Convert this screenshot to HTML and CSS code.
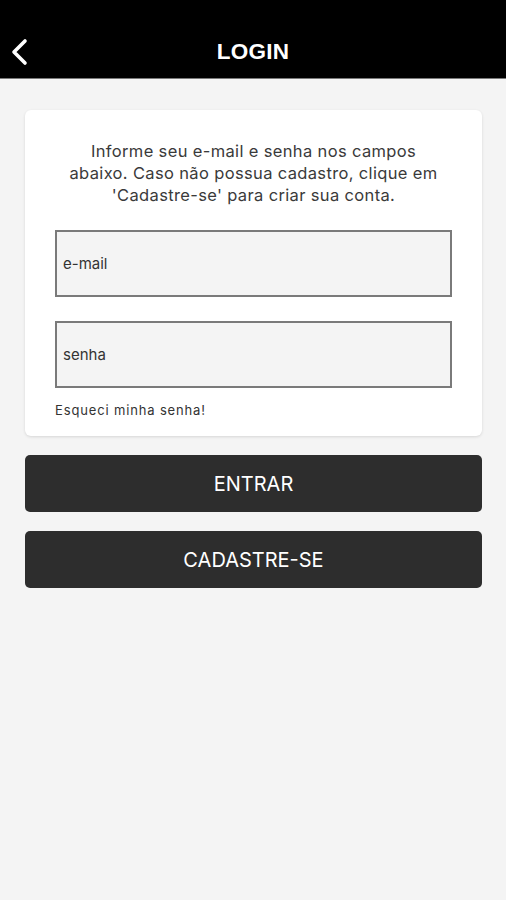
FILE: index.html
```html
<!DOCTYPE html>
<html lang="pt">
<head>
<meta charset="utf-8">
<title>Login</title>
<link rel="stylesheet" href="styles.css">
</head>
<body>
<header class="topbar">
  <button class="back" aria-label="Voltar">
    <svg width="18" height="28" viewBox="0 0 18 28"><path d="M15 3 L4 14 L15 25" fill="none" stroke="#fff" stroke-width="3.6" stroke-linecap="round" stroke-linejoin="round"/></svg>
  </button>
  <h1 class="title">LOGIN</h1>
</header>
<main class="content">
  <section class="card">
    <p class="intro">Informe seu e-mail e senha nos campos abaixo. Caso não possua cadastro, clique em 'Cadastre-se' para criar sua conta.</p>
    <div class="field"><span class="placeholder">e-mail</span></div>
    <div class="field field-2"><span class="placeholder">senha</span></div>
    <a class="forgot">Esqueci minha senha!</a>
  </section>
  <button class="btn">ENTRAR</button>
  <button class="btn">CADASTRE-SE</button>
</main>
</body>
</html>
```
FILE: styles.css
```css
* { box-sizing: border-box; }
html, body { margin: 0; padding: 0; }
body {
  background: #f4f4f4;
  font-family: Inter, "Liberation Sans", Arial, sans-serif;
  color: #333;
  width: 506px;
  height: 900px;
}
.topbar {
  height: 79px;
  background: #000;
  border-bottom: 1px solid #7a7a7a;
  position: relative;
  display: flex;
  align-items: flex-end;
  justify-content: center;
  padding-bottom: 13px;
}
.back {
  position: absolute;
  left: 8px;
  top: 38px;
  background: none;
  border: 0;
  padding: 0;
  width: 22px;
  height: 28px;
}
.title {
  margin: 0;
  color: #fff;
  font-family: "Liberation Sans", Arial, sans-serif;
  font-size: 22.5px;
  font-weight: bold;
  line-height: 26px;
  letter-spacing: 0.3px;
}
.content {
  padding: 31px 24px 0 25px;
  display: flex;
  flex-direction: column;
}
.card {
  background: #fff;
  border-radius: 6px;
  box-shadow: 0 1px 3px rgba(0,0,0,0.12);
  padding: 30px 30px 18px 30px;
  display: flex;
  flex-direction: column;
  height: 326px;
}
.intro {
  margin: 0 0 24px;
  padding: 0 7px;
  text-align: center;
  font-size: 16.5px;
  line-height: 22px;
  letter-spacing: 0.35px;
  color: #3a3a3a;
}
.field {
  height: 67px;
  border: 2px solid #7a7a7a;
  background: #f4f4f4;
  display: flex;
  align-items: center;
  padding-left: 6px;
}
.field-2 { margin-top: 24px; }
.placeholder {
  font-size: 15px;
  color: #333;
}
.forgot {
  margin-top: 14px;
  font-size: 13px;
  letter-spacing: 0.85px;
  color: #333;
}
.btn {
  height: 57px;
  margin-top: 19px;
  border: 0;
  border-radius: 5px;
  background: #2d2d2d;
  color: #fff;
  font-family: Inter, "Liberation Sans", Arial, sans-serif;
  font-size: 20px;
}
.btn + .btn { margin-top: 19px; }
```
